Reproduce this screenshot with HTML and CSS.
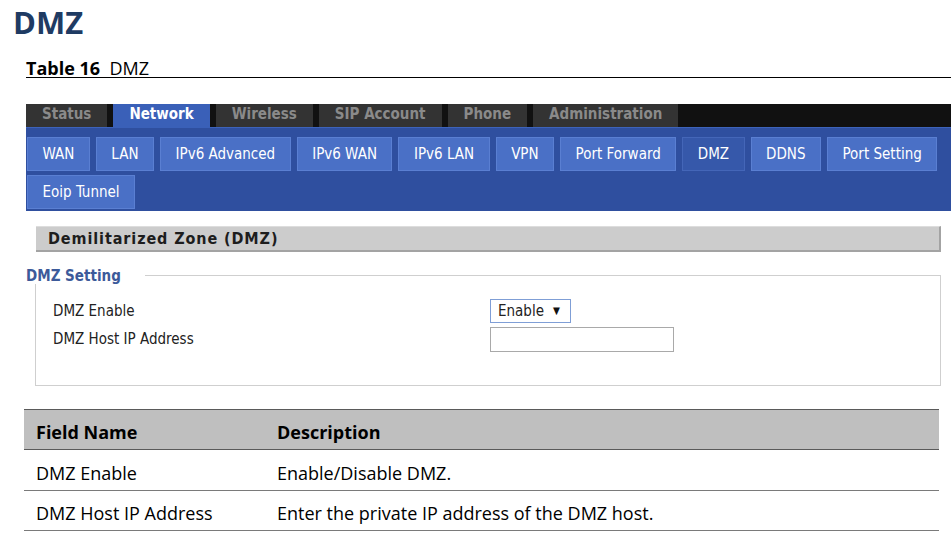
FILE: index.html
```html
<!DOCTYPE html>
<html>
<head>
<meta charset="utf-8">
<title>DMZ</title>
<link rel="stylesheet" href="styles.css">
</head>
<body>
<div class="page">
  <h1 class="title">DMZ</h1>
  <div class="caption"><b>Table 16</b>&nbsp; DMZ</div>

  <div class="ui">
    <div class="topnav">
      <span class="ttab">Status</span>
      <span class="ttab active">Network</span>
      <span class="ttab">Wireless</span>
      <span class="ttab">SIP Account</span>
      <span class="ttab">Phone</span>
      <span class="ttab">Administration</span>
    </div>
    <div class="subbar">
      <div class="subrow">
        <span class="stab">WAN</span>
        <span class="stab">LAN</span>
        <span class="stab">IPv6 Advanced</span>
        <span class="stab">IPv6 WAN</span>
        <span class="stab">IPv6 LAN</span>
        <span class="stab">VPN</span>
        <span class="stab">Port Forward</span>
        <span class="stab active">DMZ</span>
        <span class="stab">DDNS</span>
        <span class="stab">Port Setting</span>
      </div>
      <div class="subrow">
        <span class="stab">Eoip Tunnel</span>
      </div>
    </div>
    <div class="content">
      <div class="section-head">Demilitarized Zone (DMZ)</div>
      <fieldset class="setting">
        <legend>DMZ Setting</legend>
        <div class="frow">
          <span class="flabel">DMZ Enable</span>
          <span class="select">Enable<span class="arrow">&#9660;</span></span>
        </div>
        <div class="frow">
          <span class="flabel">DMZ Host IP Address</span>
          <span class="input"></span>
        </div>
      </fieldset>
    </div>
  </div>

  <table class="desc">
    <thead>
      <tr><th class="c1">Field Name</th><th>Description</th></tr>
    </thead>
    <tbody>
      <tr><td class="c1">DMZ Enable</td><td>Enable/Disable DMZ.</td></tr>
      <tr><td class="c1">DMZ Host IP Address</td><td>Enter the private IP address of the DMZ host.</td></tr>
    </tbody>
  </table>
</div>
</body>
</html>
```

FILE: styles.css
```css
html, body {
  margin: 0;
  padding: 0;
  background: #ffffff;
}

.page {
  width: 951px;
  height: 547px;
  overflow: hidden;
  font-family: "Open Sans", "Noto Sans", sans-serif;
  color: #000;
}

.title {
  margin: 2px 0 0 13px;
  font-size: 31px;
  line-height: 40px;
  font-weight: 700;
  color: #1f3b63;
}

.caption {
  margin: 18px 0 0 26px;
  font-size: 18px;
  line-height: 17px;
  border-bottom: 1.5px solid #000;
}

.caption b {
  font-weight: 700;
}

/* router UI screenshot */
.ui {
  margin: 25.5px 0 0 26px;
  width: 925px;
  font-family: "DejaVu Sans Condensed", "DejaVu Sans", sans-serif;
  font-stretch: condensed;
  background: #fff;
}

.topnav {
  display: flex;
  gap: 6px;
  height: 23px;
  background: #111111;
}

.ttab {
  display: block;
  padding: 0 16px;
  height: 23px;
  line-height: 20px;
  font-size: 15px;
  font-weight: 700;
  color: #8a8a8a;
  background: #333333;
  white-space: nowrap;
}

.ttab.active {
  color: #ffffff;
  background: #3a60b8;
  height: 24px;
}

.subbar {
  background: #2f4f9f;
  border-top: 1px solid #3d63bb;
  padding: 9px 0 2px 1px;
  display: flex;
  flex-direction: column;
  gap: 4px;
}

.subrow {
  display: flex;
  gap: 6px;
}

.stab {
  display: block;
  height: 32px;
  line-height: 32px;
  padding: 0 14.5px;
  font-size: 15px;
  color: #ffffff;
  background: #4a70c6;
  border: 1px solid #5a7fd2;
  white-space: nowrap;
}

.stab.active {
  background: #3658aa;
  border-color: #4466b8;
}

.content {
  padding: 15px 0 3px 9px;
  width: 906px;
}

.section-head {
  margin-left: 1px;
  height: 23px;
  line-height: 23px;
  padding-left: 12px;
  background: #cccccc;
  border-top: 1px solid #dddddd;
  border-bottom: 2px solid #a3a3a3;
  border-right: 2px solid #a3a3a3;
  font-size: 16px;
  font-weight: 700;
  letter-spacing: 0.9px;
  color: #1d1d1d;
}

.setting {
  margin: 16px 0 0 0;
  padding: 15px 17px 33px 17px;
  border: 1px solid #cfcfcf;
}

.setting legend {
  margin-left: -27px;
  padding: 0 24px 0 0;
  background: #fff;
  font-size: 15px;
  line-height: 16px;
  font-weight: 700;
  color: #3c5a9a;
}

.frow {
  display: flex;
  align-items: center;
  height: 24px;
  margin-bottom: 4px;
}

.frow:last-child {
  margin-bottom: 0;
  height: 25px;
}

.flabel {
  width: 437px;
  font-size: 15px;
  color: #222;
}

.select {
  display: flex;
  align-items: center;
  box-sizing: border-box;
  width: 81px;
  height: 24px;
  padding-left: 7px;
  border: 1px solid #7f9ed6;
  font-size: 15px;
  color: #222;
  background: #fff;
}

.arrow {
  font-size: 10px;
  margin-left: 9px;
  color: #111;
}

.input {
  display: block;
  box-sizing: border-box;
  width: 184px;
  height: 25px;
  border: 1px solid #a9a9a9;
  background: #fff;
}

/* document table */
.desc {
  margin: 20px 0 0 24px;
  width: 915px;
  border-collapse: collapse;
  font-size: 18px;
}

.desc th, .desc td {
  text-align: left;
  padding: 10.5px 12px 4px 12px;
  line-height: 25px;
  border-top: 1.5px solid #7a7a7a;
  border-bottom: 1.5px solid #7a7a7a;
}

.desc th {
  background: #bfbfbf;
  font-weight: 700;
  border-top-color: #5a5a5a;
  border-bottom-color: #5a5a5a;
}

.desc .c1 {
  width: 217px;
}
```
